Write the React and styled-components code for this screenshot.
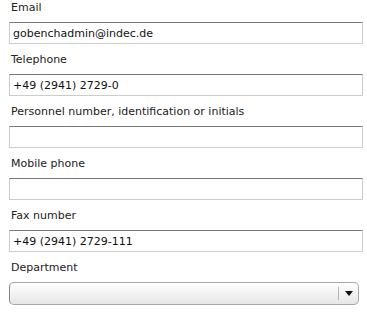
import React from "react";
import styled, { createGlobalStyle } from "styled-components";

const Global = createGlobalStyle`
  html, body { margin: 0; padding: 0; background: #ffffff; }
  body { font-family: "DejaVu Sans", Verdana, sans-serif; font-size: 11px; color: #222; }
`;

const Form = styled.div`
  padding: 0 0 0 9px;
  width: 354px;
`;

const Field = styled.div`
  display: flex;
  flex-direction: column;
  margin-bottom: 8px;
`;

const Label = styled.label`
  display: block;
  height: 16px;
  line-height: 16px;
  margin: 0 0 6px 2px;
  font-size: 11px;
  color: #222222;
`;

const Input = styled.input`
  box-sizing: border-box;
  width: 354px;
  height: 22px;
  margin: 0;
  padding: 0 3px;
  border: 1px solid #cccccc;
  border-top-color: #7a7a7a;
  border-radius: 0;
  background: #fff;
  font-family: "DejaVu Sans", Verdana, sans-serif;
  font-size: 11px;
  color: #111111;
  outline: none;
`;

const Select = styled.div`
  box-sizing: border-box;
  width: 350px;
  height: 23px;
  display: flex;
  align-items: center;
  border: 1px solid #a8a8a8;
  border-left-color: #858585;
  border-radius: 5px;
  background: linear-gradient(#ffffff, #e6e6e6);
`;

const SelectValue = styled.div`
  flex: 1;
`;

const Divider = styled.div`
  width: 1px;
  height: 13px;
  background: #b4b4b4;
`;

const Arrow = styled.div`
  width: 19px;
  display: flex;
  justify-content: center;
  align-items: center;
`;

const fields = [
  ["Email", "gobenchadmin@indec.de"],
  ["Telephone", "+49 (2941) 2729-0"],
  ["Personnel number, identification or initials", ""],
  ["Mobile phone", ""],
  ["Fax number", "+49 (2941) 2729-111"],
];

export default function App() {
  return (
    <>
      <Global />
      <Form>
        {fields.map(([label, value]) => (
          <Field key={label}>
            <Label>{label}</Label>
            <Input defaultValue={value} />
          </Field>
        ))}
        <Field>
          <Label>Department</Label>
          <Select>
            <SelectValue />
            <Divider />
            <Arrow>
              <svg width="8" height="5" viewBox="0 0 8 5">
                <path d="M0 0H8L4 5Z" fill="#111" />
              </svg>
            </Arrow>
          </Select>
        </Field>
      </Form>
    </>
  );
}
